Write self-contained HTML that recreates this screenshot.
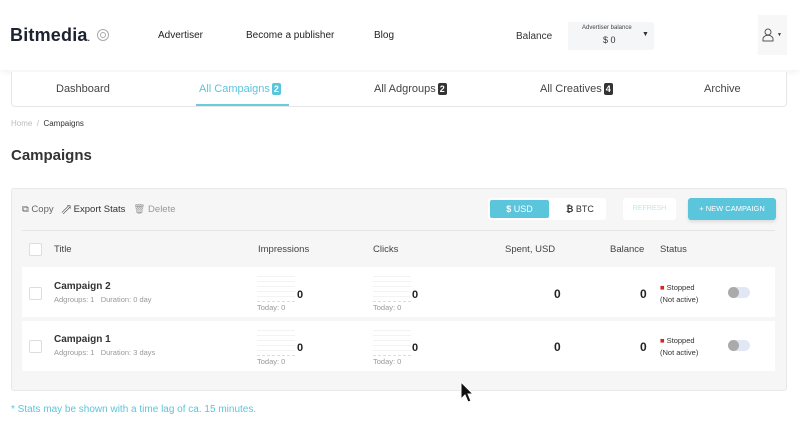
<!DOCTYPE html>
<html><head><meta charset="utf-8"><style>
*{box-sizing:border-box;margin:0;padding:0}
body{width:800px;height:427px;overflow:hidden;background:#fff;font-family:"Liberation Sans",sans-serif;color:#333;position:relative}
.a{position:absolute;white-space:nowrap}
.hdr{position:absolute;left:0;top:0;width:800px;height:70px;background:#fff;box-shadow:0 2px 6px rgba(0,0,0,.06)}
.nav{font-size:10px;color:#222}
.tabs{left:11px;top:72px;width:776px;height:35px;border:1px solid #e6e6e6;border-top:none;border-radius:0 0 4px 4px;background:#fff}
.tab{font-size:11px;color:#444;top:83px}
.badge{display:inline-block;background:#333;color:#fff;font-size:9px;font-weight:bold;padding:0 2px;border-radius:2px;line-height:12px;margin-left:2px}
.panel{left:11px;top:188px;width:776px;height:203px;background:#f6f6f6;border:1px solid #e8e8e8;border-radius:3px}
.row{left:22px;width:753px;height:50px;background:#fff}
.cb{width:13px;height:13px;border:1px solid #ddd;background:#fff;border-radius:2px}
.th{font-size:9.5px;color:#444;top:244px}
.spark{width:38px;height:30px;border-bottom:1px dashed #d5e2d5;background:repeating-linear-gradient(#fff 0 4px,#f3f3f3 4px 5px)}
.sm{font-size:7.5px;color:#999}
.num{font-size:11px;font-weight:bold;color:#222}
.tg{width:22px;height:11px;border-radius:6px;background:#e2e8f3}
.tg:before{content:"";position:absolute;left:0;top:0;width:11px;height:11px;border-radius:50%;background:#aaa}
</style></head><body>
<div class="hdr"></div>
<div class="a" style="left:10px;top:25px;font-size:18px;font-weight:bold;color:#1d2230;letter-spacing:.2px">Bitmedia<span style="font-size:8px">.</span></div>
<svg class="a" style="left:96px;top:28px" width="14" height="14" viewBox="0 0 14 14"><circle cx="7" cy="7" r="5.5" fill="none" stroke="#aaa"/><circle cx="7" cy="7" r="2.5" fill="none" stroke="#aaa"/></svg>
<div class="a nav" style="left:158px;top:30px">Advertiser</div>
<div class="a nav" style="left:246px;top:30px">Become a publisher</div>
<div class="a nav" style="left:374px;top:30px">Blog</div>
<div class="a nav" style="left:516px;top:31px;color:#333">Balance</div>
<div class="a" style="left:568px;top:22px;width:86px;height:28px;background:#f5f6f7;border-radius:2px"></div>
<div class="a" style="left:582px;top:25px;font-size:6px;color:#444">Advertiser balance</div>
<div class="a" style="left:603px;top:35px;font-size:9px;color:#333">$ 0</div>
<div class="a" style="left:642px;top:31px;font-size:7px">▼</div>
<div class="a" style="left:758px;top:15px;width:29px;height:40px;background:#f7f7f7"></div>
<svg class="a" style="left:762px;top:28px" width="14" height="14" viewBox="0 0 14 14"><circle cx="6" cy="4" r="3" fill="none" stroke="#555"/><path d="M1 13v-2a4 3 0 0 1 10 0v2z" fill="none" stroke="#555"/></svg>
<div class="a" style="left:777px;top:32px;font-size:5px">▼</div>

<div class="a tabs"></div>
<div class="a tab" style="left:56px">Dashboard</div>
<div class="a tab" style="left:199px;color:#5bc5db">All Campaigns<span class="badge" style="background:#5bc5db">2</span></div>
<div class="a" style="left:196px;top:104px;width:93px;height:2px;background:#6ccbe0"></div>
<div class="a tab" style="left:374px">All Adgroups<span class="badge">2</span></div>
<div class="a tab" style="left:540px">All Creatives<span class="badge">4</span></div>
<div class="a tab" style="left:704px">Archive</div>

<div class="a" style="left:11px;top:119px;font-size:8px;color:#bbb">Home &nbsp;/ &nbsp;<span style="color:#333">Campaigns</span></div>
<div class="a" style="left:11px;top:147px;font-size:15px;font-weight:bold;color:#333">Campaigns</div>

<div class="a panel"></div>
<div class="a" style="left:22px;top:204px;font-size:9.5px;color:#666">⧉ Copy &nbsp;&nbsp;<span style="color:#333">⇗ Export Stats</span> &nbsp;&nbsp;<span style="color:#999">🗑︎ Delete</span></div>
<div class="a" style="left:488px;top:198px;width:118px;height:22px;background:#fff;border-radius:3px"></div>
<div class="a" style="left:490px;top:200px;width:59px;height:18px;background:#5bc5db;border-radius:2px;color:#fff;font-size:9px;text-align:center;line-height:18px"><b>$</b> USD</div>
<div class="a" style="left:566px;top:204px;font-size:9px;color:#333"><b>₿</b> BTC</div>
<div class="a" style="left:623px;top:198px;width:53px;height:22px;background:#fff;border-radius:3px;font-size:7px;color:#bfe5ee;text-align:center;line-height:22px">REFRESH</div>
<div class="a" style="left:688px;top:198px;width:88px;height:22px;background:#5bc5db;border-radius:3px;font-size:7.5px;color:#fff;text-align:center;line-height:22px;box-shadow:0 2px 3px rgba(0,0,0,.1)">+ NEW CAMPAIGN</div>
<div class="a" style="left:22px;top:230px;width:753px;height:1px;background:#e4e4e4"></div>

<div class="a cb" style="left:29px;top:243px"></div>
<div class="a th" style="left:54px">Title</div>
<div class="a th" style="left:258px">Impressions</div>
<div class="a th" style="left:373px">Clicks</div>
<div class="a th" style="left:505px">Spent, USD</div>
<div class="a th" style="left:610px">Balance</div>
<div class="a th" style="left:660px">Status</div>

<div class="a row" style="top:267px"></div>
<div class="a row" style="top:321px"></div>

<div class="a cb" style="left:29px;top:287px"></div>
<div class="a" style="left:54px;top:281px;font-size:10px;font-weight:bold">Campaign 2</div>
<div class="a sm" style="left:54px;top:295px">Adgroups: 1 &nbsp; Duration: 0 day</div>
<div class="a spark" style="left:257px;top:272px"></div><div class="a num" style="left:297px;top:289px">0</div><div class="a sm" style="left:257px;top:303px">Today: 0</div>
<div class="a spark" style="left:373px;top:272px"></div><div class="a num" style="left:412px;top:289px">0</div><div class="a sm" style="left:373px;top:303px">Today: 0</div>
<div class="a num" style="left:554px;top:287px;font-size:12px">0</div>
<div class="a num" style="left:640px;top:287px;font-size:12px">0</div>
<div class="a" style="left:660px;top:282px;font-size:7.5px;line-height:12px"><span style="color:#d22">■</span> Stopped<br>(Not active)</div>
<div class="a tg" style="left:728px;top:287px"></div>

<div class="a cb" style="left:29px;top:340px"></div>
<div class="a" style="left:54px;top:334px;font-size:10px;font-weight:bold">Campaign 1</div>
<div class="a sm" style="left:54px;top:348px">Adgroups: 1 &nbsp; Duration: 3 days</div>
<div class="a spark" style="left:257px;top:326px"></div><div class="a num" style="left:297px;top:342px">0</div><div class="a sm" style="left:257px;top:357px">Today: 0</div>
<div class="a spark" style="left:373px;top:326px"></div><div class="a num" style="left:412px;top:342px">0</div><div class="a sm" style="left:373px;top:357px">Today: 0</div>
<div class="a num" style="left:554px;top:340px;font-size:12px">0</div>
<div class="a num" style="left:640px;top:340px;font-size:12px">0</div>
<div class="a" style="left:660px;top:335px;font-size:7.5px;line-height:12px"><span style="color:#d22">■</span> Stopped<br>(Not active)</div>
<div class="a tg" style="left:728px;top:340px"></div>

<svg class="a" style="left:460px;top:381px" width="14" height="22" viewBox="0 0 14 22"><path d="M1 1v17l4-4 3 7 3-1-3-7h5z" fill="#111" stroke="#fff" stroke-width="1"/></svg>
<div class="a" style="left:11px;top:404px;font-size:10px;color:#5bc5db">* Stats may be shown with a time lag of ca. 15 minutes.</div>
</body></html>
